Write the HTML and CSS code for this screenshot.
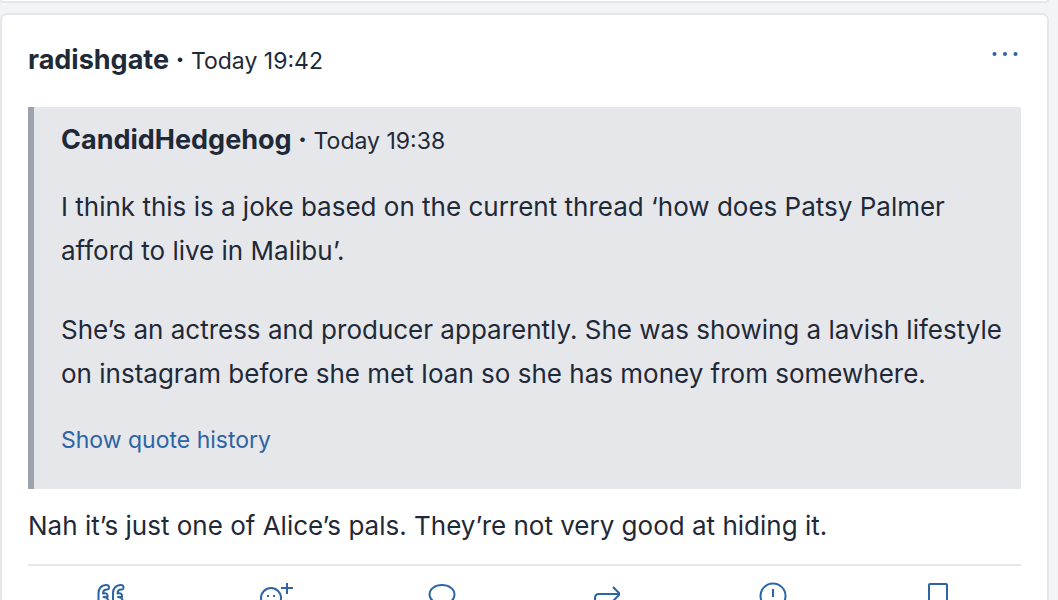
FILE: index.html
```html
<!DOCTYPE html>
<html lang="en">
<head>
    <meta charset="UTF-8">
    <meta name="viewport" content="width=device-width, initial-scale=1.0">
    <title>Thread</title>
    <link rel="stylesheet" href="styles.css">
</head>
<body>
    <main class="thread">
        <div class="post post-previous"></div>
        <article class="post">
            <header class="post-header">
                <p class="byline"><strong>radishgate ·</strong> <time>Today 19:42</time></p>
                <button type="button" class="icon-btn" aria-label="More options">
                    <svg width="26" height="6" viewBox="0 0 26 6" fill="currentColor"><circle cx="2.500" cy="3" r="2"/><circle cx="13" cy="3" r="2"/><circle cx="23.500" cy="3" r="2"/></svg>
                </button>
            </header>

            <blockquote class="quote">
                <p class="byline"><strong>CandidHedgehog ·</strong> <time>Today 19:38</time></p>
                <p class="quote-text">I think this is a joke based on the current thread ‘how does Patsy Palmer afford to live in Malibu’.</p>
                <p class="quote-text">She’s an actress and producer apparently. She was showing a lavish lifestyle on instagram before she met Ioan so she has money from somewhere.</p>
                <a href="#" class="quote-history">Show quote history</a>
            </blockquote>

            <p class="post-text">Nah it’s just one of Alice’s pals. They’re not very good at hiding it.</p>

            <footer class="actions">
                <button type="button" class="icon-btn" aria-label="Quote">
                    <svg width="28" height="28" viewBox="0 0 28 28"><path d="M9.500 3C4 3 1.500 7 1.500 11v9a5 5 0 1 0 5-5h4c.5-3-1.500-4.500-4.500-3.500 0-2.500 1.500-4 4-4 3 0 2.500-4.500-.5-4.500ZM24 3c-5.500 0-8 4-8 8v9a5 5 0 1 0 5-5h4c.5-3-1.500-4.500-4.500-3.500 0-2.500 1.500-4 4-4 3 0 2.500-4.500-.5-4.500Z"/></svg>
                </button>
                <button type="button" class="icon-btn" aria-label="React">
                    <svg width="34" height="28" viewBox="0 0 34 28"><circle cx="12" cy="16" r="10"/><path d="M28 1v11M22 6h12M7 18c1 5 9 5 10 0"/><path d="M9 13v2M15 13v2"/></svg>
                </button>
                <button type="button" class="icon-btn" aria-label="Reply">
                    <svg width="28" height="28" viewBox="0 0 28 28"><path d="M14 3C7 3 1.500 7 1.500 12.500c0 3 1.500 5 3.500 6.500l-2 6 6-3c10 2 17.500-3 17.500-9.500C26.500 7 21 3 14 3Z"/></svg>
                </button>
                <button type="button" class="icon-btn" aria-label="Share">
                    <svg width="28" height="28" viewBox="0 0 28 28"><path d="M2 23v-7q0-4 4-4h20M20 5l6 6v2l-6 6"/></svg>
                </button>
                <button type="button" class="icon-btn" aria-label="Report">
                    <svg width="28" height="28" viewBox="0 0 28 28"><circle cx="14" cy="14" r="12.500"/><path d="M14 7v8M14 19v2"/></svg>
                </button>
                <button type="button" class="icon-btn" aria-label="Bookmark">
                    <svg width="20" height="28" viewBox="0 0 20 28"><path d="M1 3q0-1 1-1h16q1 0 1 1v23l-9-7-9 7Z"/></svg>
                </button>
            </footer>
        </article>
    </main>
</body>
</html>
```
FILE: styles.css
```css
* {
    box-sizing: border-box;
}

body {
    margin: 0;
    height: 100vh;
    overflow: hidden;
    background-color: #f3f4f6;
    color: #1f2937;
    font-family: Inter, "Liberation Sans", sans-serif;
    font-size: 26px;
}

p {
    margin: 0;
}

.thread {
    margin-right: 9px;
}

.post {
    margin-bottom: 10px;
    padding: 27px 26px 0;
    background-color: #fff;
    border: 2px solid #e5e7eb;
    border-radius: 7px;
}

.post-previous {
    height: 3px;
    padding: 0;
    border-top: 0;
    border-radius: 0 0 7px 7px;
}

/* Header */
.post-header {
    display: flex;
    justify-content: space-between;
    align-items: flex-start;
    margin-bottom: 28px;
}

.byline {
    font-size: 23px;
    line-height: 36px;
}

.byline strong {
    font-size: 27px;
    font-weight: 700;
}

.icon-btn {
    display: flex;
    justify-content: center;
    padding: 0;
    border: 0;
    background: none;
    color: #2c64a4;
    cursor: pointer;
}

.post-header .icon-btn {
    padding: 9px 3px;
}

/* Quoted post */
.quote {
    margin: 0;
    padding: 15px 16px 32px 27px;
    border-left: 6px solid #9ca3af;
    background-color: #e5e7eb;
}

.quote-text {
    margin-top: 26px;
    line-height: 44px;
}

.quote-text + .quote-text {
    margin-top: 35px;
}

.quote-history {
    display: block;
    margin-top: 27px;
    color: #2c64a4;
    font-size: 23px;
    line-height: 34px;
    text-decoration: none;
}

.post-text {
    padding: 15px 0 16px;
    line-height: 44px;
}

/* Action bar */
.actions {
    display: grid;
    grid-template-columns: repeat(6, 1fr);
    padding-top: 16px;
    border-top: 2px solid #e5e7eb;
}

.actions svg {
    fill: none;
    stroke: currentColor;
    stroke-width: 2;
    stroke-linejoin: round;
}
```
